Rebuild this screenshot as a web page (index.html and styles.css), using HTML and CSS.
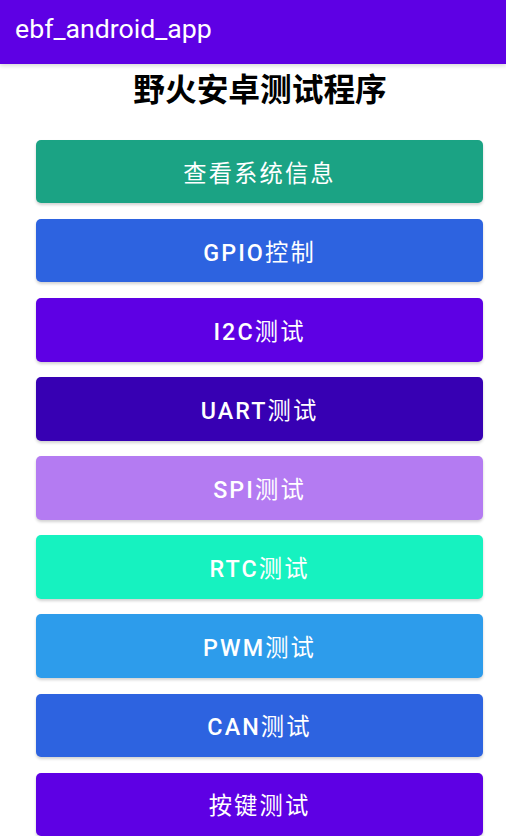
FILE: index.html
```html
<!DOCTYPE html>
<html lang="zh">

<head>
    <meta charset="UTF-8">
    <meta name="viewport" content="width=device-width, initial-scale=1.0">
    <title>ebf_android_app</title>
    <link rel="stylesheet" href="styles.css">
</head>

<body>

    <div class="app-bar">ebf_android_app</div>

    <h1 class="page-title">野火安卓测试程序</h1>

    <div class="button-list">
        <button class="btn btn-teal"><span class="cjk">查看系统信息</span></button>
        <button class="btn btn-blue">GPIO<span class="cjk">控制</span></button>
        <button class="btn btn-purple">I2C<span class="cjk">测试</span></button>
        <button class="btn btn-deep">UART<span class="cjk">测试</span></button>
        <button class="btn btn-lilac">SPI<span class="cjk">测试</span></button>
        <button class="btn btn-mint">RTC<span class="cjk">测试</span></button>
        <button class="btn btn-sky">PWM<span class="cjk">测试</span></button>
        <button class="btn btn-blue">CAN<span class="cjk">测试</span></button>
        <button class="btn btn-purple"><span class="cjk">按键测试</span></button>
    </div>

</body>

</html>
```

FILE: styles.css
```css
body {
    font-family: Roboto, "Noto Sans CJK SC", sans-serif;
    background-color: #fff;
    margin: 0;
}

.app-bar {
    height: 64px;
    line-height: 59px;
    padding-left: 15px;
    background-color: #5e00e4;
    color: #fff;
    font-size: 26.7px;
    font-weight: 400;
    box-shadow: 0 2px 4px rgba(0, 0, 0, 0.15);
}

.page-title {
    margin: 0;
    padding-left: 14px;
    height: 54px;
    line-height: 54px;
    text-align: center;
    font-size: 31.7px;
    font-weight: 700;
    color: #000;
}

.button-list {
    display: flex;
    flex-direction: column;
    gap: 15.7px;
    margin: 22px 23px 0 36px;
}

.btn {
    height: 63.4px;
    padding: 0;
    border: none;
    border-radius: 5px;
    color: #fff;
    font-family: Roboto, "Noto Sans CJK SC", sans-serif;
    font-size: 23.3px;
    font-weight: 500;
    letter-spacing: 0.09em;
    box-shadow: 0 2px 3px rgba(0, 0, 0, 0.18);
    cursor: pointer;
}

.btn .cjk {
    font-weight: 400;
}

.btn-teal {
    background-color: #1ba384;
}

.btn-blue {
    background-color: #2d63e0;
}

.btn-purple {
    background-color: #5e00e4;
}

.btn-deep {
    background-color: #3700b3;
}

.btn-lilac {
    background-color: #b47bf2;
}

.btn-mint {
    background-color: #16f2c0;
}

.btn-sky {
    background-color: #2d9ceb;
}
```
